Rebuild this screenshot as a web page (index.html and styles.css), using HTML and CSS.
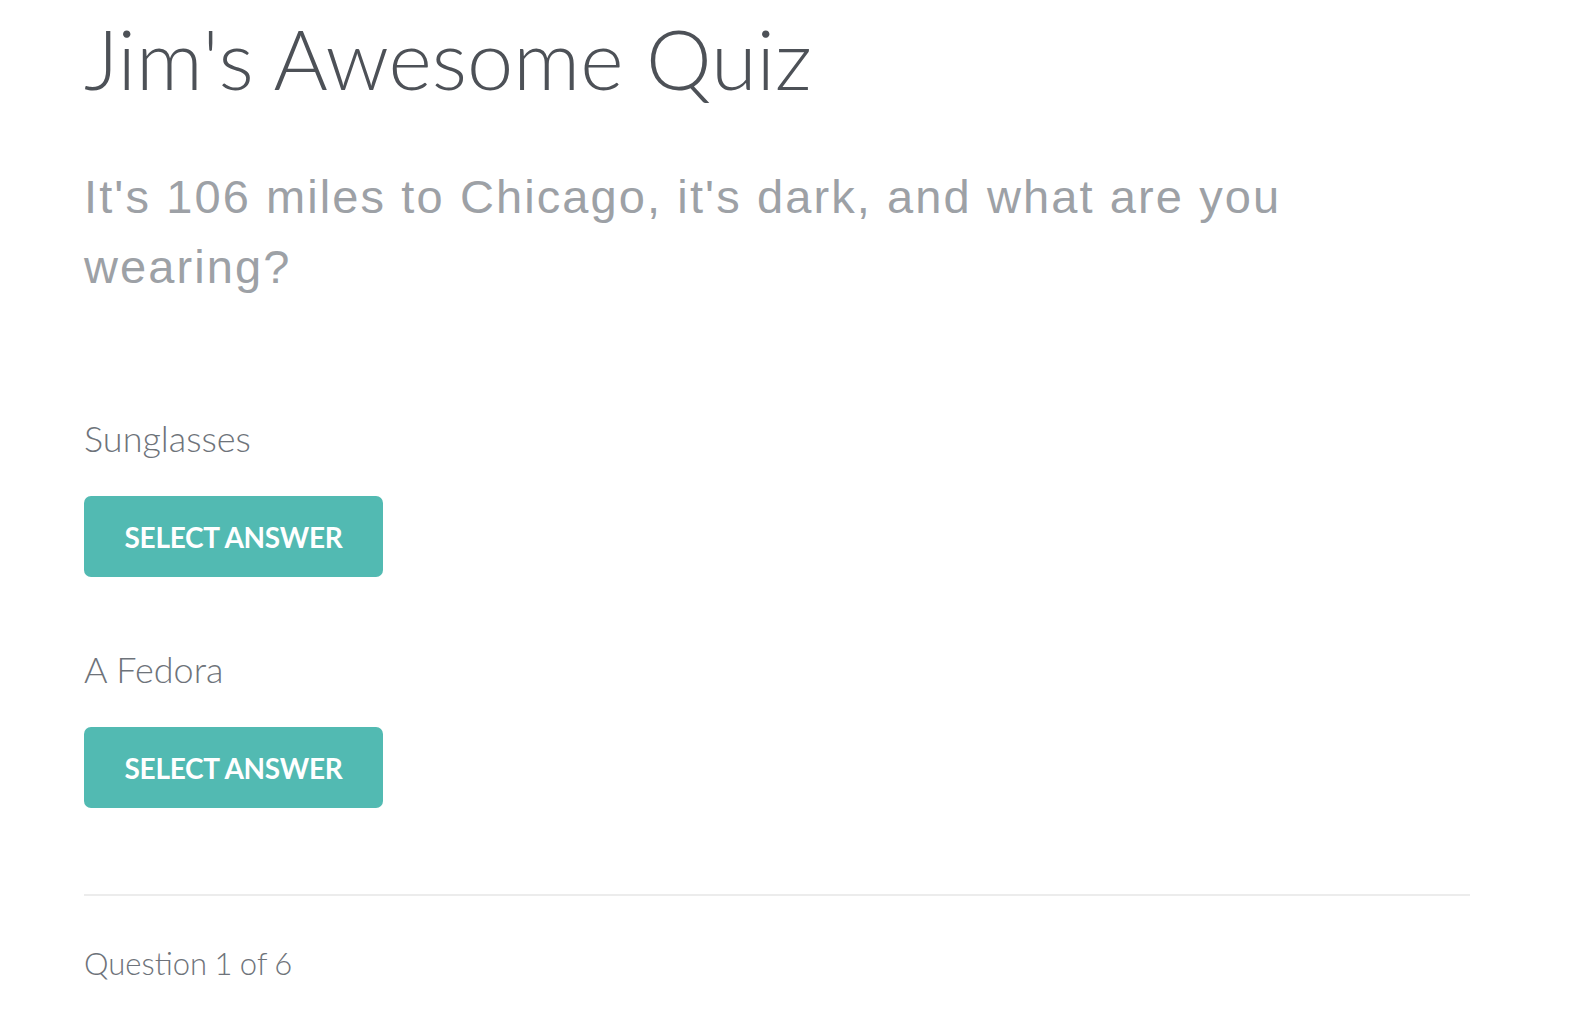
FILE: index.html
```html
<!DOCTYPE html>
<html>
<head>
<meta charset="utf-8">
<link rel="stylesheet" href="styles.css">
</head>
<body>
<div class="container">
  <h1 class="title">Jim's Awesome Quiz</h1>
  <p class="question">It's 106 miles to Chicago, it's dark, and what are you wearing?</p>
  <div class="answers">
    <div class="answer">
      <div class="answer-text">Sunglasses</div>
      <button class="select-btn">SELECT ANSWER</button>
    </div>
    <div class="answer">
      <div class="answer-text">A Fedora</div>
      <button class="select-btn">SELECT ANSWER</button>
    </div>
  </div>
  <hr class="divider">
  <div class="progress">Question 1 of 6</div>
</div>
</body>
</html>
```
FILE: styles.css
```css
html, body {
  margin: 0;
  padding: 0;
  background: #ffffff;
}
body {
  font-family: "Lato", "Liberation Sans", sans-serif;
}
.container {
  width: 1386px;
  margin-left: 84px;
}
.title {
  font-family: "Lato", sans-serif;
  font-weight: 300;
  font-size: 83px;
  line-height: 1;
  color: #4d5157;
  margin: 17px 0 0 0;
}
.question {
  font-family: "Liberation Sans", Arial, sans-serif;
  font-size: 47px;
  line-height: 70px;
  letter-spacing: 2.1px;
  color: #9da1a6;
  margin: 62px 0 0 0;
  width: 1280px;
}
.answers {
  margin-top: 115px;
}
.answer {
  display: flex;
  flex-direction: column;
  align-items: flex-start;
  margin-bottom: 71px;
}
.answer-text {
  font-size: 36px;
  font-weight: 300;
  color: #6e737a;
  line-height: 1.2;
}
.select-btn {
  margin-top: 36px;
  width: 299px;
  height: 81px;
  border: none;
  border-radius: 7px;
  background: #52bab2;
  color: #ffffff;
  font-family: "Lato", sans-serif;
  font-weight: 700;
  font-size: 28px;
  padding: 0;
  letter-spacing: -0.3px;
}
.divider {
  border: none;
  border-top: 2px solid #ececec;
  margin: 86px 0 0 0;
}
.progress {
  font-size: 31px;
  font-weight: 300;
  color: #6e737a;
  line-height: 1.2;
  margin-top: 49px;
  word-spacing: -1px;
}
```
